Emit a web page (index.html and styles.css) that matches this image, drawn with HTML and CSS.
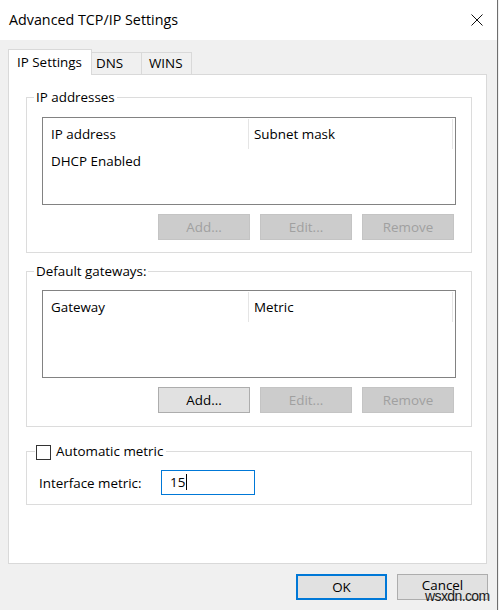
FILE: index.html
```html
<!DOCTYPE html>
<html lang="en">
<head>
<meta charset="utf-8">
<title>Advanced TCP/IP Settings</title>
<link rel="stylesheet" href="styles.css">
</head>
<body>
<div class="window">
  <header class="titlebar">
    <span class="title">Advanced TCP/IP Settings</span>
    <svg class="close" width="12" height="12" viewBox="0 0 12 12" aria-label="Close">
      <path d="M0.5 0.5 L11.5 11.5 M11.5 0.5 L0.5 11.5" stroke="#111" stroke-width="1" fill="none"/>
    </svg>
  </header>

  <div class="content">
    <nav class="tabs">
      <div class="tab active">IP Settings</div>
      <div class="tab tab-dns">DNS</div>
      <div class="tab tab-wins">WINS</div>
    </nav>

    <div class="panel">
      <section class="group group-ip">
        <div class="group-title">IP addresses</div>
        <div class="listbox">
          <div class="lv-head">
            <div class="col c1">IP address</div>
            <div class="col c2">Subnet mask</div>
          </div>
          <div class="lv-row">DHCP Enabled</div>
        </div>
        <div class="btnrow">
          <button class="btn" disabled>Add...</button>
          <button class="btn" disabled>Edit...</button>
          <button class="btn" disabled>Remove</button>
        </div>
      </section>

      <section class="group group-gw">
        <div class="group-title">Default gateways:</div>
        <div class="listbox">
          <div class="lv-head">
            <div class="col c1">Gateway</div>
            <div class="col c2">Metric</div>
          </div>
        </div>
        <div class="btnrow">
          <button class="btn">Add...</button>
          <button class="btn" disabled>Edit...</button>
          <button class="btn" disabled>Remove</button>
        </div>
      </section>

      <section class="group group-metric">
        <div class="group-title check-title">
          <span class="checkbox"></span>
          <span>Automatic metric</span>
        </div>
        <div class="metric-row">
          <span class="metric-label">Interface metric:</span>
          <div class="textbox"><span class="value">15</span></div>
        </div>
      </section>
    </div>

    <footer class="footer">
      <button class="btn btn-default">OK</button>
      <button class="btn btn-cancel">Cancel</button>
    </footer>
  </div>

  <span class="watermark">wsxdn.com</span>
</div>
</body>
</html>
```

FILE: styles.css
```css
* {
  box-sizing: border-box;
}

html, body {
  margin: 0;
  padding: 0;
  background: #f0f0f0;
}

body {
  width: 499px;
  height: 610px;
  overflow: hidden;
  font-family: "Segoe UI", "Open Sans", "Noto Sans", sans-serif;
  font-size: 13.4px;
  color: #000;
}

.window {
  position: relative;
  width: 498px;
  height: 610px;
  background: #f0f0f0;
  border-right: 1px solid #6e6e6e;
}

/* Title bar */
.titlebar {
  height: 40px;
  background: #fff;
  display: flex;
  align-items: center;
  padding-left: 9px;
}

.title {
  font-size: 14.3px;
  line-height: 40px;
}

.close {
  margin-left: auto;
  margin-right: 14px;
  display: block;
}

/* Dialog body */
.content {
  padding: 9px 0 0 8px;
}

.tabs {
  display: flex;
  align-items: flex-end;
  height: 26px;
  margin-bottom: -1px;
  position: relative;
  z-index: 1;
}

.tab {
  height: 22px;
  margin-bottom: 1px;
  width: 50px;
  border: 1px solid #d9d9d9;
  border-left: none;
  border-bottom: none;
  background: #f0f0f0;
  line-height: 21px;
  white-space: nowrap;
}

.tab.active {
  width: 84px;
  height: 26px;
  margin-bottom: 0;
  border-left: 1px solid #d9d9d9;
  background: #fff;
  padding-left: 8px;
  line-height: 24px;
}

.tab-dns {
  padding-left: 4px;
}

.tab-wins {
  padding-left: 7px;
}

.panel {
  width: 479px;
  height: 490px;
  background: #fff;
  border: 1px solid #d9d9d9;
  padding: 22px 14px 0 17px;
}

/* Group boxes */
.group {
  border: 1px solid #dcdcdc;
  padding: 0 15px 12px 15px;
}

.group-title {
  display: block;
  width: fit-content;
  height: 18px;
  line-height: 18px;
  margin: -10px 0 0 -8px;
  padding: 0 2px;
  background: #fff;
  white-space: nowrap;
}

.group-gw {
  margin-top: 18px;
  padding-bottom: 13px;
}

.group-metric {
  margin-top: 24px;
  padding: 0 12px 9px 12px;
}

/* List views */
.listbox {
  margin-top: 11px;
  height: 88px;
  border: 1px solid #828282;
  background: #fff;
}

.group-gw .listbox {
  margin-top: 10px;
}

.lv-head {
  display: flex;
  height: 32px;
}

.col {
  height: 30px;
  margin-top: 1px;
  line-height: 31px;
  border-right: 1px solid #e5e5e5;
  white-space: nowrap;
}

.c1 {
  width: 206px;
  padding-left: 8px;
}

.c2 {
  width: 204px;
  padding-left: 5px;
}

.lv-row {
  line-height: 22px;
  padding-left: 8px;
}

/* Buttons */
.btnrow {
  display: flex;
  justify-content: flex-end;
  gap: 10px;
  margin-top: 9px;
  padding-right: 2px;
}

.btn {
  width: 92px;
  height: 26px;
  padding: 0;
  font: inherit;
  color: #000;
  background: #e1e1e1;
  border: 1px solid #adadad;
  text-align: center;
  line-height: 22px;
}

.btn:disabled {
  background: #cccccc;
  border-color: #c4c4c4;
  color: #a0a0a0;
}

/* Metric group */
.check-title {
  display: flex;
  align-items: center;
  gap: 5px;
  margin-left: -4px;
  padding: 0 3px 0 1px;
}

.checkbox {
  width: 15px;
  height: 15px;
  border: 1px solid #333;
  background: #fff;
  margin-top: 2px;
}

.metric-row {
  display: flex;
  align-items: center;
  margin-top: 10px;
}

.metric-label {
  width: 122px;
  white-space: nowrap;
}

.textbox {
  width: 94px;
  height: 25px;
  border: 1px solid #0078d7;
  background: #fff;
  padding-left: 8px;
  line-height: 22px;
}

.value {
  display: inline-block;
  line-height: 16px;
  padding-right: 1px;
  border-right: 1px solid #000;
}

/* Footer buttons */
.footer {
  display: flex;
  justify-content: flex-end;
  gap: 10px;
  margin-top: 10px;
  padding-right: 9px;
}

.footer .btn {
  width: 91px;
}

.btn-default {
  border: 2px solid #0078d7;
}

.btn-cancel {
  line-height: 20px;
  padding-bottom: 4px;
}

/* Site mark printed over the corner */
.watermark {
  position: absolute;
  left: 425px;
  top: 588px;
  font-family: "Liberation Sans", Arial, sans-serif;
  font-size: 14px;
  line-height: 16px;
  letter-spacing: -0.6px;
  color: #1a1a1a;
}
```
